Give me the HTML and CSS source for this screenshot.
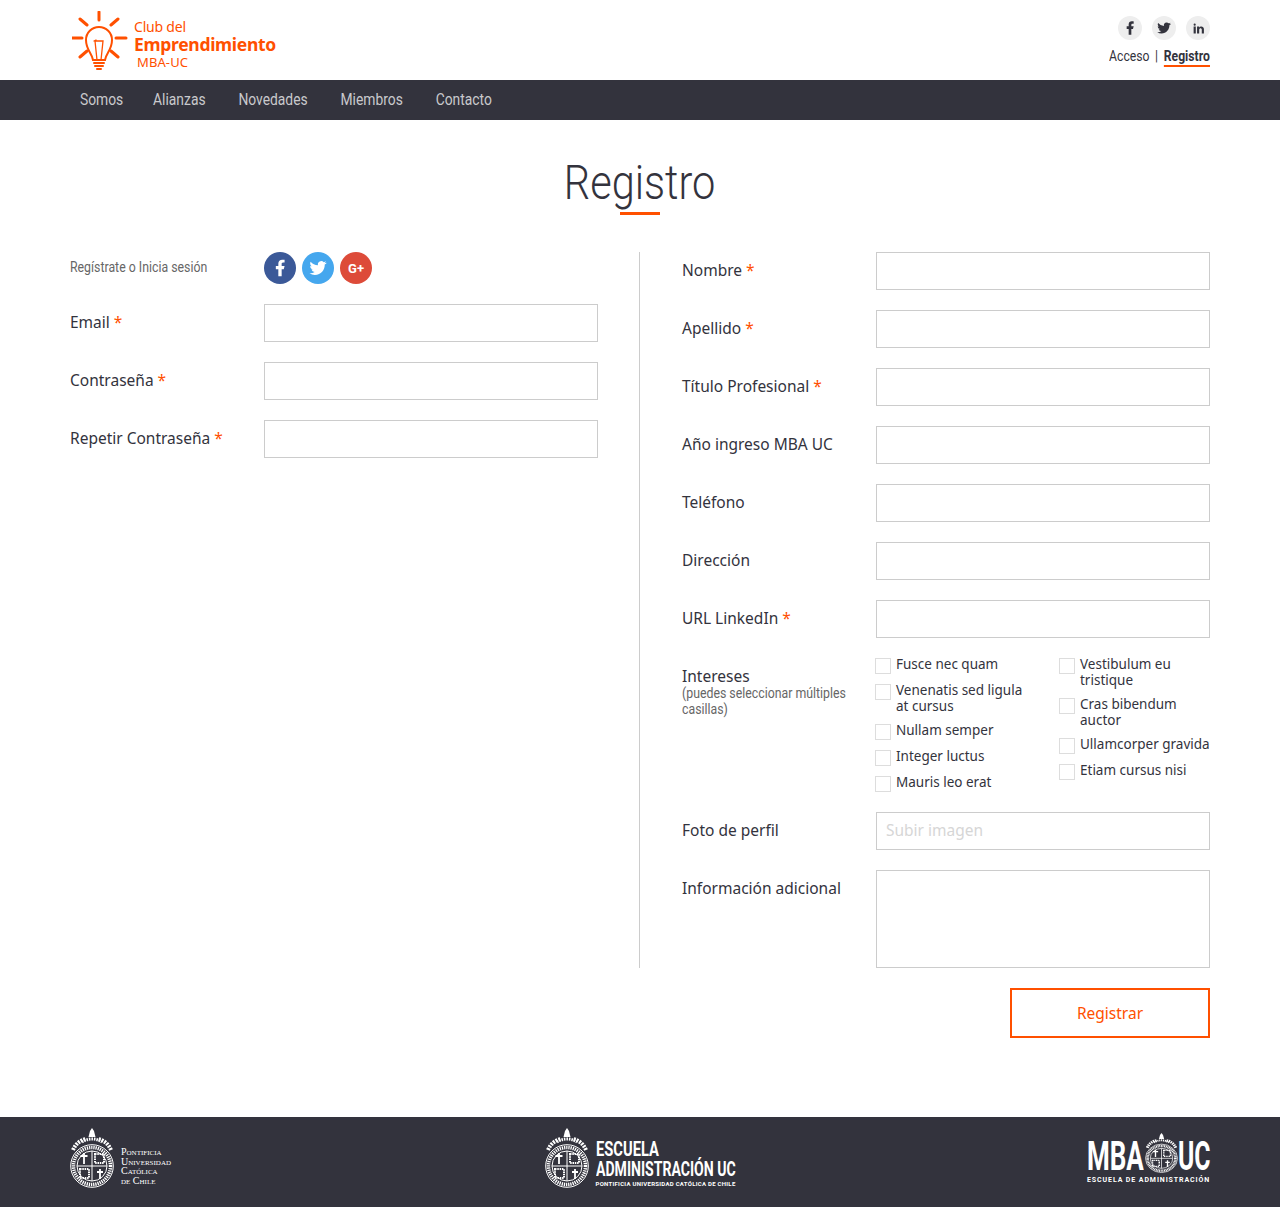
FILE: index.html
```html
<!DOCTYPE html>
<html lang="es">
<head>
	<meta charset="UTF-8">
	<title>Registro</title>
	<link rel="stylesheet" href="styles.css">
</head>
<body>
	<svg class="defs" width="0" height="0">
		<symbol id="seal" viewBox="0 0 44 60" preserveAspectRatio="none">
			<g fill="none" stroke="#fff">
				<circle cx="22" cy="38" r="21.300" stroke-width="1"/>
				<circle cx="22" cy="38" r="18.500" stroke-width="3.500" stroke-dasharray="1.300 .9"/>
				<circle cx="22" cy="38" r="15" stroke-width="1"/>
				<path d="M22 23v30M7 38h30" stroke-width="1"/>
				<path d="M14 25v11M10.500 28h7M30 41v10M27 44h6" stroke-width="1.800"/>
				<path d="M25 26h9v9h-9zM10 41h9v9h-9z" stroke-width="2" stroke-dasharray="1.500 .8"/>
				<path d="M3 22c3-7 8-10 13-11M41 22c-3-7-8-10-13-11" stroke-width="4" stroke-dasharray="2 1"/>
				<path d="M12 14c6-4 14-4 20 0" stroke-width="3" stroke-dasharray="1.500 1"/>
			</g>
			<path d="M22 0l2 3 1.500 6h-7L20 3z" fill="#fff"/>
		</symbol>
	</svg>

	<header class="top">
		<div class="wrap top-in">
			<a class="logo" href="#">
				<svg class="logo-icon" width="58" height="60" viewBox="1 0 58 60" fill="none" stroke="#ff5000" stroke-linecap="round">
					<path d="M28 1v8M1 27h10M45 27h10M9 8l7 6M47 8l-7 6M9 46l7-6M47 46l-7-6" stroke-width="3"/>
					<path d="M22 49c-1-7-7-10-7-20a13 13 0 0 1 26 0c0 10-6 13-7 20z" stroke-width="2"/>
					<path d="M24 30h8l-2 19h-4zM23 30l2-1" stroke-width="1.300"/>
					<path d="M23 52h10M24 55h8M26 58h4" stroke-width="2"/>
				</svg>
				<div class="logo-text">
					<span class="logo-small">Club del</span>
					<span class="logo-big">Emprendimiento</span>
					<span class="logo-mba">MBA-UC</span>
				</div>
			</a>
			<div class="top-right">
				<div class="top-social">
					<a href="#"><svg width="16" height="16" viewBox="0 0 24 24"><path d="M14 13.500h2.500l1-4H14v-2c0-1.030 0-2 2-2h1.500V2.140c-.326-.043-1.557-.14-2.857-.14C11.928 2 10 3.657 10 6.700v2.800H7v4h3V22h4v-8.500z"/></svg></a>
					<a href="#"><svg width="16" height="16" viewBox="0 0 24 24"><path d="M22.162 5.656a8.384 8.384 0 0 1-2.402.658A4.196 4.196 0 0 0 21.600 4c-.82.488-1.719.83-2.656 1.015a4.182 4.182 0 0 0-7.126 3.814 11.874 11.874 0 0 1-8.620-4.370 4.168 4.168 0 0 0-.566 2.103c0 1.450.738 2.731 1.860 3.481a4.168 4.168 0 0 1-1.894-.523v.052a4.185 4.185 0 0 0 3.355 4.101 4.210 4.210 0 0 1-1.890.072A4.185 4.185 0 0 0 7.970 16.650a8.394 8.394 0 0 1-6.191 1.732 11.830 11.830 0 0 0 6.410 1.880c7.693 0 11.900-6.373 11.900-11.900 0-.18-.005-.362-.013-.54a8.496 8.496 0 0 0 2.087-1.548z"/></svg></a>
					<a href="#"><svg width="13" height="13" viewBox="0 0 24 24"><path d="M6.940 5a2 2 0 1 1-4-.002 2 2 0 0 1 4 .002zM7 8.480H3V21h4V8.480zm6.320 0H9.340V21h3.940v-6.570c0-3.660 4.770-4 4.770 0V21H22v-7.930c0-6.170-7.060-5.940-8.720-2.910l.04-1.680z"/></svg></a>
				</div>
				<div class="top-links">
					<a href="#">Acceso</a>
					<span class="sep">|</span>
					<a class="current" href="#">Registro</a>
				</div>
			</div>
		</div>
	</header>

	<nav class="nav">
		<div class="wrap nav-in">
			<a href="#">Somos</a>
			<a href="#">Alianzas</a>
			<a href="#">Novedades</a>
			<a href="#">Miembros</a>
			<a href="#">Contacto</a>
		</div>
	</nav>

	<main class="wrap">
		<h1 class="title"><span>Registro</span></h1>
		<div class="title-bar"></div>

		<form class="cols">
			<div class="col-left">
				<div class="row social-row">
					<div class="label-small"><span>Regístrate o Inicia sesión</span></div>
					<div class="social">
						<a class="fb" href="#"><svg width="20" height="20" viewBox="0 0 24 24"><path d="M14 13.500h2.500l1-4H14v-2c0-1.030 0-2 2-2h1.500V2.140c-.326-.043-1.557-.14-2.857-.14C11.928 2 10 3.657 10 6.700v2.800H7v4h3V22h4v-8.500z"/></svg></a>
						<a class="tw" href="#"><svg width="20" height="20" viewBox="0 0 24 24"><path d="M22.162 5.656a8.384 8.384 0 0 1-2.402.658A4.196 4.196 0 0 0 21.600 4c-.82.488-1.719.83-2.656 1.015a4.182 4.182 0 0 0-7.126 3.814 11.874 11.874 0 0 1-8.620-4.370 4.168 4.168 0 0 0-.566 2.103c0 1.450.738 2.731 1.860 3.481a4.168 4.168 0 0 1-1.894-.523v.052a4.185 4.185 0 0 0 3.355 4.101 4.210 4.210 0 0 1-1.890.072A4.185 4.185 0 0 0 7.970 16.650a8.394 8.394 0 0 1-6.191 1.732 11.830 11.830 0 0 0 6.410 1.880c7.693 0 11.900-6.373 11.900-11.900 0-.18-.005-.362-.013-.54a8.496 8.496 0 0 0 2.087-1.548z"/></svg></a>
						<a class="gp" href="#">G+</a>
					</div>
				</div>
				<div class="row"><label>Email <i>*</i></label><input type="text"></div>
				<div class="row"><label>Contraseña <i>*</i></label><input type="text"></div>
				<div class="row"><label>Repetir Contraseña <i>*</i></label><input type="text"></div>
			</div>

			<div class="col-right">
				<div class="row"><label>Nombre <i>*</i></label><input type="text"></div>
				<div class="row"><label>Apellido <i>*</i></label><input type="text"></div>
				<div class="row"><label>Título Profesional <i>*</i></label><input type="text"></div>
				<div class="row"><label>Año ingreso MBA UC</label><input type="text"></div>
				<div class="row"><label>Teléfono</label><input type="text"></div>
				<div class="row"><label>Dirección</label><input type="text"></div>
				<div class="row"><label>URL LinkedIn <i>*</i></label><input type="text"></div>
				<div class="row row-checks">
					<div class="checks-label">
						<label>Intereses</label>
						<small>(puedes seleccionar múltiples casillas)</small>
					</div>
					<div class="checks">
						<div class="checks-col">
							<label class="check"><input type="checkbox"><span>Fusce nec quam</span></label>
							<label class="check"><input type="checkbox"><span>Venenatis sed ligula at cursus</span></label>
							<label class="check"><input type="checkbox"><span>Nullam semper</span></label>
							<label class="check"><input type="checkbox"><span>Integer luctus</span></label>
							<label class="check"><input type="checkbox"><span>Mauris leo erat</span></label>
						</div>
						<div class="checks-col">
							<label class="check"><input type="checkbox"><span>Vestibulum eu tristique</span></label>
							<label class="check"><input type="checkbox"><span>Cras bibendum auctor</span></label>
							<label class="check"><input type="checkbox"><span>Ullamcorper gravida</span></label>
							<label class="check"><input type="checkbox"><span>Etiam cursus nisi</span></label>
						</div>
					</div>
				</div>
				<div class="row"><label>Foto de perfil</label><input type="text" placeholder="Subir imagen"></div>
				<div class="row last"><label>Información adicional</label><textarea></textarea></div>
			</div>
		</form>

		<div class="actions"><button class="btn" type="button">Registrar</button></div>
	</main>

	<footer class="footer">
		<div class="wrap footer-in">
			<div class="foot-puc">
				<svg width="44" height="60"><use href="#seal"/></svg>
				<div class="puc-text">Pontificia<br>Universidad<br>Católica<br>de Chile</div>
			</div>
			<div class="foot-esc">
				<svg width="44" height="60"><use href="#seal"/></svg>
				<div class="esc-text">
					<b class="esc-top">ESCUELA</b>
					<b>ADMINISTRACIÓN UC</b>
					<span>PONTIFICIA UNIVERSIDAD CATÓLICA DE CHILE</span>
				</div>
			</div>
			<div class="foot-mba">
				<div class="mba-top"><b class="mba">MBA</b><svg width="33" height="40"><use href="#seal"/></svg><b class="uc">UC</b></div>
				<span>ESCUELA DE ADMINISTRACIÓN</span>
			</div>
		</div>
	</footer>
</body>
</html>
```

FILE: styles.css
```css
*{margin:0;padding:0;box-sizing:border-box;}
body{font-family:"Noto Sans","Open Sans",sans-serif;font-size:15.5px;color:#33333d;background:#fff;}
a{text-decoration:none;color:inherit;}
.defs{display:block;height:0;}

.wrap{width:1140px;margin:0 auto;}

/* cabecera */
.top{height:80px;}
.top-in{display:flex;justify-content:space-between;height:80px;}
.logo{display:flex;padding:11px 0 0 2px;}
.logo-icon{margin-right:4px;}
.logo-text{display:flex;flex-direction:column;color:#ff5000;font-family:"Noto Sans",sans-serif;}
.logo-small{font-size:14px;line-height:16px;margin-top:8px;letter-spacing:-.2px;}
.logo-big{font-size:17.500px;line-height:19px;font-weight:700;letter-spacing:-.3px;}
.logo-mba{font-size:13px;line-height:16px;margin-left:3px;letter-spacing:.1px;}

.top-right{display:flex;flex-direction:column;align-items:flex-end;padding-top:16px;}
.top-social{display:flex;gap:10px;}
.top-social a{width:24px;height:24px;border-radius:50%;background:#eee;display:flex;align-items:center;justify-content:center;}
.top-social svg{fill:#33333d;}
.top-links{display:flex;align-items:flex-start;margin-top:8px;font-family:Roboto,sans-serif;font-size:14px;line-height:16px;transform:scaleX(.87);transform-origin:right;}
.top-links .sep{margin:0 6.500px;}
.top-links .current{font-weight:700;border-bottom:2px solid #ff5000;line-height:17px;}

/* menu: Roboto comprimida a lo ancho */
.nav{height:40px;background:#33333d;}
.nav-in{display:flex;padding-left:11.500px;transform:scaleX(.865);transform-origin:left;}
.nav a{font-family:Roboto,sans-serif;font-size:16px;line-height:39px;color:#c9c9cc;margin-right:38px;white-space:nowrap;}
.nav a:first-child{margin-right:34.500px;}

/* titulo */
.title{height:92px;padding-top:36px;font-family:Roboto,sans-serif;font-weight:300;font-size:48px;line-height:54px;text-align:center;}
.title span{display:inline-block;transform:scaleX(.865);}
.title-bar{width:40px;height:3px;background:#ff5000;margin:0 auto 37px;}

/* formulario */
.cols{display:flex;}
.col-left{width:570px;padding-right:41px;border-right:1px solid #ccc;}
.col-right{width:528px;margin-left:42px;}

.row{display:flex;margin-bottom:20px;}
.row.last{margin-bottom:0;}
.row label{width:194px;flex:none;line-height:36px;}
.row label i{color:#ff5000;font-style:normal;}
.row input[type=text],.row textarea{width:334px;height:38px;border:1px solid #ccc;background:#fff;padding:0 9px 2px;font:15.500px "Noto Sans",sans-serif;border-radius:0;}
.row textarea{height:98px;resize:none;}
.row input::placeholder{color:#d6d6d6;}

.social-row{align-items:center;height:32px;}
.label-small{width:194px;margin-top:-3px;font-family:Roboto,sans-serif;font-size:14px;color:#666;}
.label-small span{display:inline-block;white-space:nowrap;transform:scaleX(.88);transform-origin:left;}
.social{display:flex;gap:6px;}
.social a{width:32px;height:32px;border-radius:50%;display:flex;align-items:center;justify-content:center;color:#fff;}
.social svg{fill:#fff;}
.fb{background:#3b5998;}
.tw{background:#45a7ee;}
.gp{background:#dd4b39;font:700 13px Roboto,sans-serif;}

/* intereses */
.row-checks{margin-top:-2px;}
.checks-label{width:193px;flex:none;padding-top:10px;}
.checks-label label{display:block;width:auto;line-height:20px;}
.checks-label small{display:block;width:190px;margin-top:-1px;font-family:Roboto,sans-serif;font-size:14px;line-height:16px;color:#666;transform:scaleX(.88);transform-origin:left;}
.checks{display:flex;}
.checks-col{width:184px;}
.checks-col:last-child{width:151px;}
.row .check{display:flex;width:auto;line-height:16px;font-size:13.500px;margin-bottom:8px;}
.row .check:last-child{margin-bottom:0;}
.check span{max-width:135px;}
.check input{appearance:none;width:16px;height:16px;flex:none;margin:2px 5px 0 0;border:1px solid #ddd;background:#fff;}

/* boton */
.actions{display:flex;justify-content:flex-end;margin-top:20px;padding-bottom:79px;}
.btn{width:200px;height:50px;border:2px solid #ff5000;background:#fff;color:#ff5000;font:15.500px "Noto Sans",sans-serif;}

/* pie */
.footer{height:90px;background:#33333d;color:#fff;}
.footer-in{display:grid;grid-template-columns:1fr auto 1fr;align-items:start;padding-top:11px;}
.foot-puc,.foot-esc{display:flex;align-items:flex-start;}
.puc-text{margin:19px 0 0 7px;font-family:"Liberation Serif",serif;font-variant:small-caps;font-size:10px;line-height:9.500px;white-space:nowrap;}
.esc-text{display:flex;flex-direction:column;width:140px;margin:12px 0 0 7px;font-family:Roboto,sans-serif;}
.esc-text b{font-size:21px;line-height:19.500px;white-space:nowrap;transform:scaleX(.67);transform-origin:left;}
.esc-text .esc-top{transform:scaleX(.7);}
.esc-text span{font-size:6px;font-weight:700;line-height:10px;letter-spacing:.28px;white-space:nowrap;}
.foot-mba{justify-self:end;display:flex;flex-direction:column;margin-top:5px;width:123px;font-family:Roboto,sans-serif;}
.mba-top{display:flex;align-items:flex-end;}
.mba-top b{display:block;font-size:40px;line-height:32px;white-space:nowrap;transform:scaleX(.65);transform-origin:left;}
.mba-top .mba{width:58px;}
.mba-top .uc{width:32px;transform:scaleX(.62);}
.foot-mba span{margin-top:3px;font-size:7px;font-weight:700;letter-spacing:.9px;white-space:nowrap;}
```
